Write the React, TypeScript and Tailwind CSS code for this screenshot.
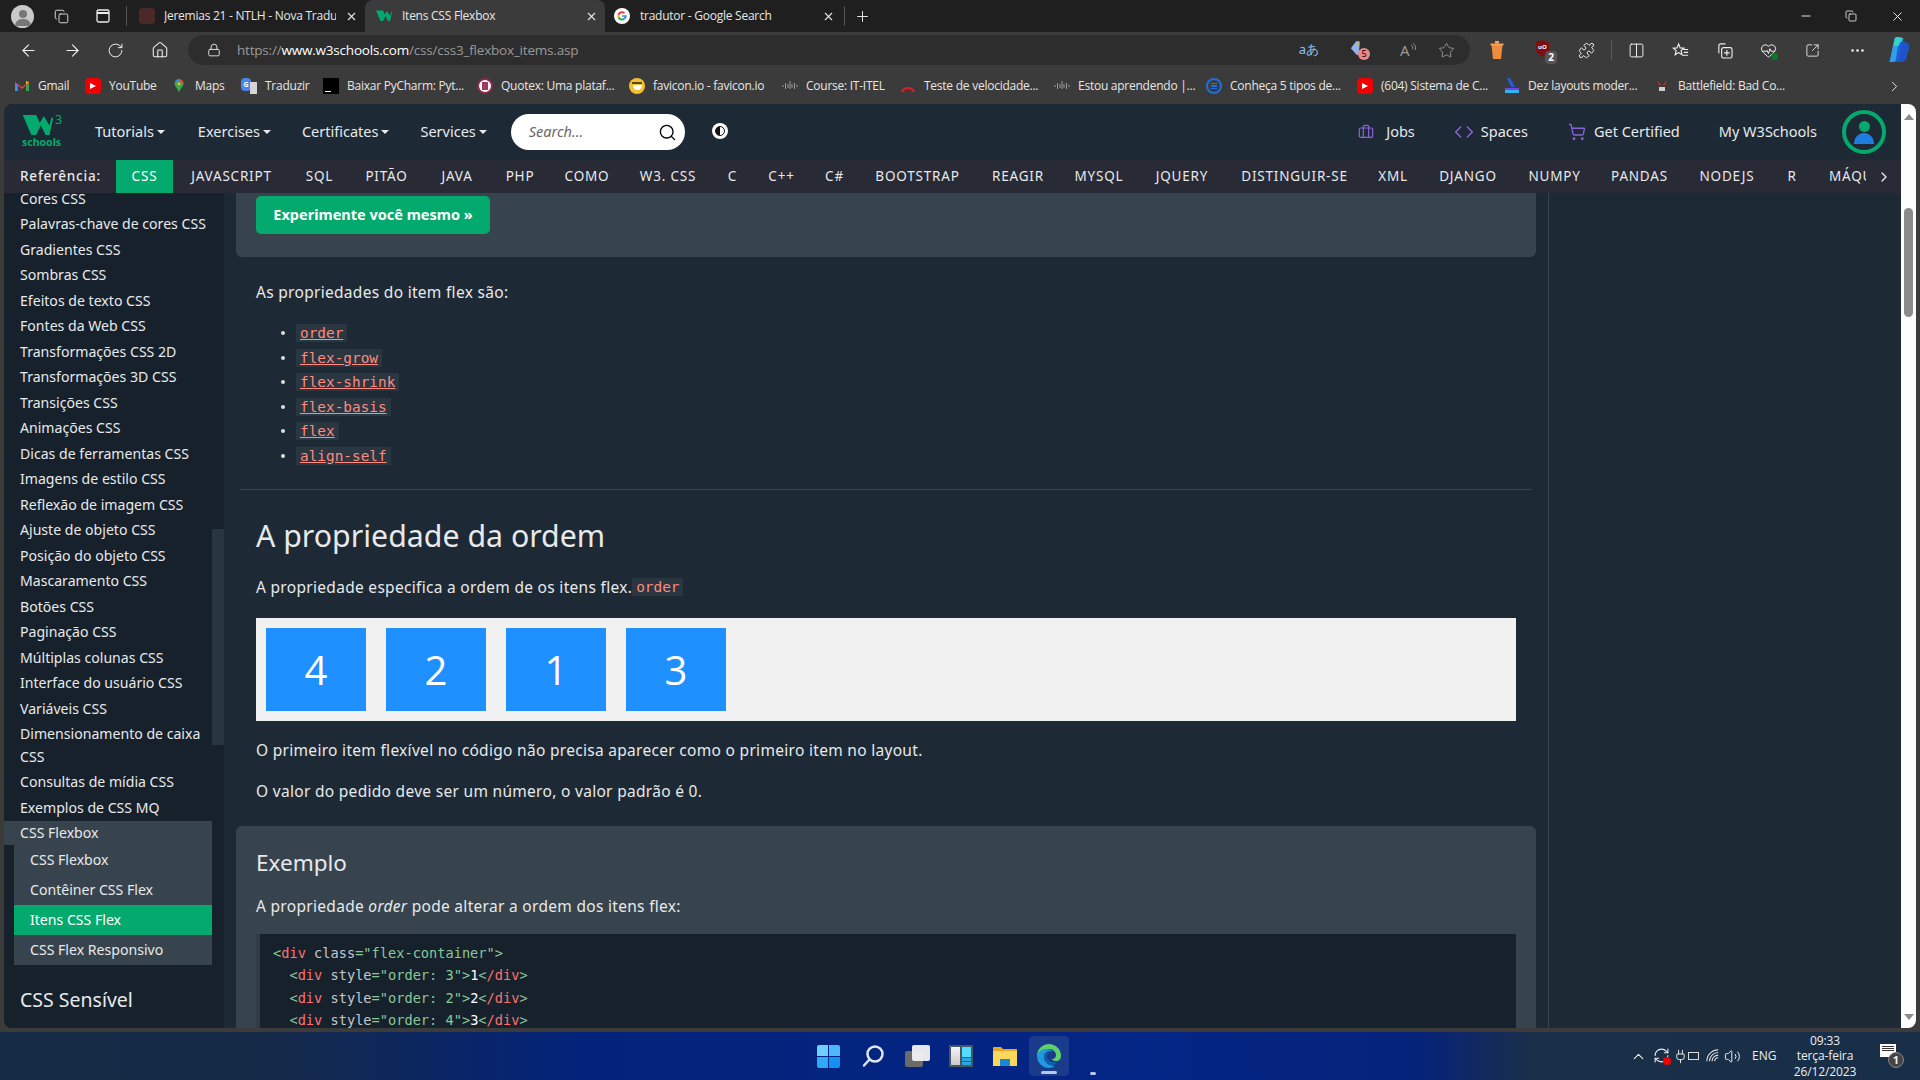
import React from "react";
import { ArrowLeft, ArrowRight, RotateCw, House, Lock, Plus, X, Minus, Star, Puzzle, Columns2, Ellipsis, ChevronRight, ChevronUp, Search, Volume2, RefreshCw, Briefcase, Code, ShoppingCart, Copy, HeartPulse, Plug, SquareArrowOutUpRight } from "lucide-react";

const W = ({ className }: { className?: string }) => (
  <svg viewBox="0 0 32 22" className={className}><path d="M0 0H14L18 8L22 1L28 11L30 3H32L28 21H24L19 11L14 21H9Z" fill="#04aa6d" /></svg>
);

const G = () => (
  <svg viewBox="0 0 24 24" className="w-4 h-4"><circle cx="12" cy="12" r="12" fill="#fff" /><path d="M12 5a7 7 0 0 1 4.700 1.800l-2 2A4 4 0 0 0 8.200 11H5.300A7 7 0 0 1 12 5z" fill="#ea4335" /><path d="M5.300 11h2.900a4 4 0 0 0 0 2.200l-2.600 2a7 7 0 0 1-.3-4.200z" fill="#fbbc05" /><path d="M8.200 13.200A4 4 0 0 0 14.300 15l2.300 1.800A7 7 0 0 1 5.600 15.200z" fill="#34a853" /><path d="M19 11v2.500c-.3 1.300-1.100 2.500-2.400 3.300L14.300 15c.7-.5 1.200-1.100 1.400-2H12v-2z" fill="#4285f4" /></svg>
);

const Yt = () => (
  <div className="w-4 h-4 rounded bg-[#f00000] flex items-center justify-center">
    <div className="w-0 h-0 border-y-[3.500px] border-y-transparent border-l-[6px] border-l-white" />
  </div>
);

const Cisco = () => (
  <svg viewBox="0 0 16 16" className="w-4 h-4" stroke="#9a9a9a" strokeWidth="1"><path d="M1 7v2M3.500 5v6M6 6v4M8 3v8M10 6v4M12.500 5v6M15 7v2" /></svg>
);

const bookmarks: { w: string; g: string; icon: React.ReactNode; t: string }[] = [
  { w: "w-[71px]", g: "gap-2", t: "Gmail", icon: <svg viewBox="0 0 16 16" className="w-4 h-4"><path d="M1 13V4l7 5 7-5v9h-3V7.500L8 11 4 7.500V13z" fill="#ea4335" /><path d="M1 13h3V7.500L1 5z" fill="#4285f4" /><path d="M12 13h3V5l-3 2.500z" fill="#34a853" /><path d="M15 4l-3 2.500V3z" fill="#fbbc05" /></svg> },
  { w: "w-[88px]", g: "gap-2", t: "YouTube", icon: <Yt /> },
  { w: "w-[68px]", g: "gap-[10px]", t: "Maps", icon: <svg viewBox="0 0 16 18" className="w-3 h-[18px]"><path d="M8 0a6 6 0 0 1 6 6C14 10 9.500 12 8 18 6.500 12 2 10 2 6A6 6 0 0 1 8 0z" fill="#34a853" /><path d="M3 3a6 6 0 0 1 5-3l2 4H6z" fill="#4285f4" /><path d="M14 6L10 4 8 0a6 6 0 0 1 6 6z" fill="#ea4335" /><circle cx="8" cy="6" r="2" fill="#fbbc05" /></svg> },
  { w: "w-[82px]", g: "gap-2", t: "Traduzir", icon: <div className="w-4 h-4 flex"><div className="w-[10px] h-[13px] rounded-sm bg-[#4a86e8] text-white text-[7px] font-bold text-center leading-[13px]">G</div><div className="w-[7px] h-[12px] mt-[4px] -ml-[1px] bg-[#d5d5d5]" /></div> },
  { w: "w-[154px]", g: "gap-2", t: "Baixar PyCharm: Pyt...", icon: <div className="w-4 h-4 bg-black flex items-end pl-[2px] pb-[2px]"><div className="w-[6px] h-[1px] bg-white" /></div> },
  { w: "w-[152px]", g: "gap-2", t: "Quotex: Uma plataf...", icon: <div className="w-4 h-4 rounded-full bg-white border-[2px] border-[#8c2a4a] flex items-center justify-center"><div className="w-[6px] h-[8px] bg-[#a13a5a]" /></div> },
  { w: "w-[153px]", g: "gap-2", t: "favicon.io - favicon.io", icon: <div className="w-4 h-4 rounded-full bg-[#f5c02c] flex flex-col items-center pt-[4px] gap-[1px]"><div className="w-[10px] h-[1.500px] bg-[#5b4a1a]" /><div className="w-[9px] h-[5px] rounded-b-full bg-white" /></div> },
  { w: "w-[118px]", g: "gap-2", t: "Course: IT-ITEL", icon: <Cisco /> },
  { w: "w-[154px]", g: "gap-2", t: "Teste de velocidade...", icon: <svg viewBox="0 0 16 16" className="w-4 h-4" fill="none" stroke="#d3232a" strokeWidth="2"><path d="M2 14a6.500 6.500 0 0 1 12 0" /><path d="M6 14a2.500 2.500 0 0 1 4 0" stroke="#8a1a1f" /></svg> },
  { w: "w-[152px]", g: "gap-2", t: "Estou aprendendo |...", icon: <Cisco /> },
  { w: "w-[151px]", g: "gap-2", t: "Conheça 5 tipos de...", icon: <div className="w-4 h-4 rounded-full border-[2px] border-[#1d6fe0] flex flex-col items-center justify-center gap-[1px]"><div className="w-[6px] h-[1.500px] bg-[#1d6fe0]" /><div className="w-[6px] h-[1.500px] bg-[#1d6fe0]" /><div className="w-[6px] h-[1.500px] bg-[#1d6fe0]" /></div> },
  { w: "w-[147px]", g: "gap-2", t: "(604) Sistema de C...", icon: <Yt /> },
  { w: "w-[150px]", g: "gap-2", t: "Dez layouts moder...", icon: <svg viewBox="0 0 16 16" className="w-4 h-4"><path d="M3 0h3l5 9H7z" fill="#1e5fe0" /><path d="M1 10h14v2H1z" fill="#7a3fe0" /><path d="M1 12h14v3H1z" fill="#2fb4f0" /></svg> },
  { w: "w-[232px]", g: "gap-2", t: "Battlefield: Bad Co...", icon: <svg viewBox="0 0 16 16" className="w-4 h-4"><path d="M1 1h14l-2 9-5 5-5-5z" fill="#3a3a3a" /><path d="M3 2l2 5h2zM13 2l-2 5H9z" fill="#c0322c" /><path d="M5 9h6v4H5z" fill="#cfcfcf" /></svg> },
];

const refs: [string, string][] = [
  ["w-[117px]", "JAVASCRIPT"], ["w-[59px]", "SQL"], ["w-[75px]", "PITÃO"], ["w-[66px]", "JAVA"], ["w-[60px]", "PHP"], ["w-[74px]", "COMO"], ["w-[88px]", "W3. CSS"], ["w-[41px]", "C"], ["w-[57px]", "C++"], ["w-[49px]", "C#"], ["w-[117px]", "BOOTSTRAP"], ["w-[84px]", "REAGIR"], ["w-[78px]", "MYSQL"], ["w-[88px]", "JQUERY"], ["w-[137px]", "DISTINGUIR-SE"], ["w-[60px]", "XML"], ["w-[90px]", "DJANGO"], ["w-[83px]", "NUMPY"], ["w-[87px]", "PANDAS"], ["w-[88px]", "NODEJS"], ["w-[42px]", "R"],
];

const side1 = ["Cores CSS", "Palavras-chave de cores CSS", "Gradientes CSS", "Sombras CSS", "Efeitos de texto CSS", "Fontes da Web CSS", "Transformações CSS 2D", "Transformações 3D CSS", "Transições CSS", "Animações CSS", "Dicas de ferramentas CSS", "Imagens de estilo CSS", "Reflexão de imagem CSS", "Ajuste de objeto CSS", "Posição do objeto CSS", "Mascaramento CSS", "Botões CSS", "Paginação CSS", "Múltiplas colunas CSS", "Interface do usuário CSS", "Variáveis CSS", "Dimensionamento de caixa CSS", "Consultas de mídia CSS", "Exemplos de CSS MQ"];

const Tag = ({ t, a, v, c }: { t: string; a?: string; v?: string; c?: string }) => (
  <>
    <span className="text-[#88c999]">&lt;</span><span className="text-[#ff7070]">{t}</span>
    {a && <span className="text-[#c2c8d0]"> {a}</span>}
    {v && <span className="text-[#88c999]">={v}</span>}
    <span className="text-[#88c999]">&gt;</span>
    {c && <span className="text-white">{c}</span>}
    {c && <><span className="text-[#88c999]">&lt;</span><span className="text-[#ff7070]">/{t}</span><span className="text-[#88c999]">&gt;</span></>}
  </>
);

const flexList = ["order", "flex-grow", "flex-shrink", "flex-basis", "flex", "align-self"];

export default function App() {
  return (
    <div className="w-[1920px] h-[1080px] overflow-hidden flex flex-col bg-[#3b3b3b] font-['Noto_Sans',sans-serif]">
      {/* tab strip */}
      <div className="h-8 shrink-0 bg-[#1f1f1f] flex items-center text-[12px] tracking-[-0.250px] text-[#e6e6e6] font-['Open_Sans',sans-serif]">
        <div className="ml-[11px] w-[23px] h-[23px] rounded-full bg-[#c9c9c9] overflow-hidden flex flex-col items-center pt-[5px]">
          <div className="w-2 h-2 rounded-full bg-[#777]" />
          <div className="w-4 h-[7px] mt-[1px] rounded-t-full bg-[#777]" />
        </div>
        <Copy size={15} strokeWidth={1.400} className="ml-[20px] text-[#eee]" />
        <svg viewBox="0 0 16 16" className="w-4 h-4 ml-[26px]" fill="none" stroke="#eee" strokeWidth="1.300"><rect x="2" y="2" width="12" height="12" rx="1.500" /><path d="M2 5h12" strokeWidth="2" /></svg>
        <div className="ml-[15px] w-px h-5 bg-[#555]" />
        <div className="w-[238px] h-8 flex items-center">
          <div className="ml-[12px] w-4 h-4 rounded-sm bg-[#4a2a28]" />
          <span className="ml-[9px] w-[172px] overflow-hidden whitespace-nowrap">Jeremias 21 - NTLH - Nova Tradu</span>
          <X size={13} className="ml-[9px]" />
        </div>
        <div className="w-[240px] h-8 bg-[#3b3b3b] rounded-t-lg flex items-center">
          <W className="ml-[11px] w-4 h-3" />
          <span className="ml-[10px] w-[180px] whitespace-nowrap">Itens CSS Flexbox</span>
          <X size={13} className="ml-[3px]" />
        </div>
        <div className="w-[239px] h-8 flex items-center">
          <div className="ml-[9px]"><G /></div>
          <span className="ml-[10px] w-[181px] whitespace-nowrap">tradutor - Google Search</span>
          <X size={13} className="ml-[1px]" />
        </div>
        <div className="w-px h-5 bg-[#555]" />
        <Plus size={17} strokeWidth={1.400} className="ml-[9px]" />
        <div className="flex-1" />
        <Minus size={14} strokeWidth={1.500} className="mr-[32px] text-white" />
        <Copy size={12} strokeWidth={1.500} className="mr-[33px] text-white" />
        <X size={15} strokeWidth={1.400} className="mr-[15px] text-white" />
      </div>

      {/* toolbar */}
      <div className="h-9 shrink-0 flex items-center text-[#eeeeee]">
        <ArrowLeft size={19} strokeWidth={1.400} className="ml-[19px]" />
        <ArrowRight size={19} strokeWidth={1.400} className="ml-[25px]" />
        <RotateCw size={17} strokeWidth={1.400} className="ml-[25px]" />
        <House size={18} strokeWidth={1.400} className="ml-[27px]" />
        <div className="ml-[19px] w-[1282px] h-[30px] rounded-full bg-[#2d2d2d] flex items-center">
          <Lock size={14} strokeWidth={1.500} className="ml-[19px]" />
          <div className="ml-[16px] text-[13.500px] whitespace-nowrap font-['Open_Sans',sans-serif] tracking-[-0.200px]">
            <span className="text-[#9a9a9a]">https://</span><span className="text-white">www.w3schools.com</span><span className="text-[#9a9a9a]">/css/css3_flexbox_items.asp</span>
          </div>
          <div className="flex-1" />
          <span className="text-[13px] text-[#8fc0ea] mr-[31px]">aあ</span>
          <div className="relative w-5 h-5 mr-[30px]">
            <svg viewBox="0 0 16 20" className="w-[14px] h-[18px]"><path d="M7 1h4v4l-1 11-2 1-7-8z" fill="#8fb4e8" /><circle cx="9" cy="4" r="1.500" fill="#f0b429" /></svg>
            <div className="absolute right-0 bottom-0 w-3 h-3 rounded-full bg-[#e88a8a] text-[9px] leading-3 text-center text-black">5</div>
          </div>
          <div className="w-[17px] h-[20px] mr-[21px] flex items-center text-[#9a9a9a]">
            <span className="text-[15px] leading-none">A</span>
            <svg viewBox="0 0 8 12" className="w-[7px] h-[11px] -mt-[6px]" fill="none" stroke="#9a9a9a" strokeWidth="1"><path d="M1 3a4 4 0 0 1 2 5M3 1a7 7 0 0 1 3 8" /></svg>
          </div>
          <Star size={17} strokeWidth={1.200} className="text-[#a0a0a0] mr-[15px]" />
        </div>
        <svg viewBox="0 0 16 20" className="w-4 h-5 ml-[19px]"><path d="M2.500 5h11l-1.500 14h-8z" fill="#f08a3c" /><path d="M1.500 3.500h13v2h-13z" fill="#f6a35c" /><rect x="6" y="1" width="4" height="2.500" fill="#f6a35c" /></svg>
        <div className="relative w-5 h-5 ml-[30px]">
          <svg viewBox="0 0 16 18" className="w-[15px] h-[17px]"><path d="M1 2l7-2 7 2v8c0 4-4 6-7 8-3-2-7-4-7-8z" fill="#7c0f12" /></svg>
          <span className="absolute left-[3px] top-[3px] text-[6px] leading-[8px] font-bold text-white">uO</span>
          <div className="absolute -right-[2px] -bottom-[4px] w-[12px] h-[13px] rounded-sm bg-[#555] text-[10px] font-bold leading-[13px] text-center text-white">2</div>
        </div>
        <Puzzle size={17} strokeWidth={1.400} className="ml-[23px]" />
        <div className="ml-[16px] w-px h-5 bg-[#5a5a5a]" />
        <Columns2 size={17} strokeWidth={1.400} className="ml-[16px]" />
        <svg viewBox="0 0 18 18" className="ml-[27px] w-[17px] h-[17px]" fill="none" stroke="#eee" strokeWidth="1.200"><path d="M7 2l1.700 4.200 4 .3-3.100 2.700 1 4.300L7 11.200l-3.600 2.300 1-4.300L1.300 6.500l4-.3z" /><path d="M12 8h5M12.500 11h4.500M11 14h6" /></svg>
        <svg viewBox="0 0 18 18" className="ml-[27px] w-[17px] h-[17px]" fill="none" stroke="#eee" strokeWidth="1.200"><path d="M3 12V4a2 2 0 0 1 2-2h5" /><rect x="6" y="6" width="11" height="11" rx="2" /><path d="M11.500 8.500v6M8.500 11.500h6" /></svg>
        <div className="relative ml-[27px] w-[17px] h-[17px]">
          <HeartPulse size={17} strokeWidth={1.400} />
          <div className="absolute -right-[1px] -bottom-[1px] w-[7px] h-[7px] rounded-full bg-[#0c7a2c]" />
        </div>
        <SquareArrowOutUpRight size={15} strokeWidth={1.400} className="ml-[28px]" />
        <Ellipsis size={17} strokeWidth={1.800} className="ml-[29px]" />
        <svg viewBox="0 0 24 28" className="w-[25px] h-[28px] ml-[20px]"><path d="M8 2h9l-5 20c-1 3-3 4-6 4H3z" fill="#2f9fe8" /><path d="M12 6h6c2 0 5 2 5 5l-3 11c-1 3-3 4-6 4H9z" fill="#1c58d8" opacity="0.900" /><path d="M9 1c3 0 6 0 7 1l-4 8-5 0z" fill="#37d3c0" /></svg>
      </div>

      {/* bookmarks */}
      <div className="h-9 shrink-0 flex items-center pl-[14px] text-[12px] text-[#e6e6e6] font-['Open_Sans',sans-serif] tracking-[-0.250px]">
        {bookmarks.map((b) => (
          <div key={b.t} className={`${b.w} ${b.g} shrink-0 flex items-center whitespace-nowrap overflow-hidden`}>
            <span className="shrink-0">{b.icon}</span>
            <span>{b.t}</span>
          </div>
        ))}
        <ChevronRight size={17} strokeWidth={1.400} className="shrink-0" />
      </div>

      {/* page */}
      <div className="h-[924px] shrink-0 mx-1 rounded-t-lg rounded-b-lg overflow-hidden flex">
        <div className="w-[1897px] flex flex-col overflow-hidden bg-[#1d2a35]">
          {/* top nav */}
          <div className="h-14 shrink-0 flex items-center text-[14.500px] text-[#e7e9eb]">
            <div className="ml-[18px] w-[40px] h-[36px] flex flex-col text-[#04aa6d] font-bold relative">
              <W className="w-8 h-[21px] mt-[1px]" />
              <span className="absolute right-0 -top-[2px] text-[12px] leading-4 font-normal">3</span>
              <span className="text-[10.500px] leading-[13px] whitespace-nowrap">schools</span>
            </div>
            <span className="ml-[33px]">Tutorials</span>
            <div className="ml-[3px] w-0 h-0 border-x-[4px] border-x-transparent border-t-[4px] border-t-[#e7e9eb]" />
            <span className="ml-[33px]">Exercises</span>
            <div className="ml-[3px] w-0 h-0 border-x-[4px] border-x-transparent border-t-[4px] border-t-[#e7e9eb]" />
            <span className="ml-[31px]">Certificates</span>
            <div className="ml-[3px] w-0 h-0 border-x-[4px] border-x-transparent border-t-[4px] border-t-[#e7e9eb]" />
            <span className="ml-[31px]">Services</span>
            <div className="ml-[3px] w-0 h-0 border-x-[4px] border-x-transparent border-t-[4px] border-t-[#e7e9eb]" />
            <div className="ml-[24px] w-[174px] h-9 rounded-full bg-white flex items-center">
              <span className="ml-[18px] italic text-[#666]">Search...</span>
              <div className="flex-1" />
              <Search size={19} strokeWidth={1.700} className="text-black mr-[8px]" />
            </div>
            <div className="ml-[27px] -mt-[3px] w-[16px] h-[16px] rounded-full bg-white flex items-center justify-center">
              <div className="w-[10px] h-[10px] rounded-full bg-[linear-gradient(90deg,#111_50%,#fff_50%)] border border-[#111]" />
            </div>
            <div className="flex-1" />
            <Briefcase size={16} strokeWidth={1.800} className="text-[#8a63d8]" />
            <span className="ml-[12px]">Jobs</span>
            <Code size={20} strokeWidth={1.800} className="ml-[39px] text-[#8a63d8]" />
            <span className="ml-[7px]">Spaces</span>
            <ShoppingCart size={18} strokeWidth={1.800} className="ml-[40px] text-[#8a63d8]" />
            <span className="ml-[8px]">Get Certified</span>
            <span className="ml-[39px]">My W3Schools</span>
            <div className="ml-[25px] mr-[15px] w-[44px] h-[44px] rounded-full border-[4px] border-[#04aa6d] flex flex-col items-center justify-center overflow-hidden">
              <div className="w-[11px] h-[11px] rounded-full bg-[#04aa6d]" />
              <div className="w-[20px] h-[11px] mt-[1px] rounded-t-full bg-[#1e7fe0]" />
            </div>
          </div>
          {/* reference bar */}
          <div className="h-[33px] shrink-0 bg-[#282a35] flex items-stretch text-[13.500px] tracking-[0.800px] text-[#e7e9eb]">
            <div className="w-[112px] pl-4 flex items-center font-medium">Referência:</div>
            <div className="w-[57px] bg-[#04aa6d] text-white flex items-center justify-center">CSS</div>
            <div className="w-[1693px] flex overflow-hidden">
              {refs.map(([w, t]) => (
                <div key={t} className={`${w} shrink-0 flex items-center justify-center`}>{t}</div>
              ))}
              <div className="pl-4 flex items-center whitespace-nowrap">MÁQUINA</div>
            </div>
            <div className="flex-1 flex items-center pl-[10px]"><ChevronRight size={16} strokeWidth={2} /></div>
          </div>
          {/* body */}
          <div className="flex-1 flex overflow-hidden">
            {/* sidebar */}
            <div className="relative w-[220px] shrink-0 bg-[#17212b] overflow-hidden text-[14.100px] text-[#e7e9eb]">
              <div className="absolute right-0 top-[336px] w-3 h-[216px] bg-[#293640]" />
              <div className="-mt-[7px] w-[208px]">
                {side1.map((s) => (
                  <div key={s} className="pl-4 pr-1 py-[1.500px] leading-[22.500px]">{s}</div>
                ))}
                <div className="pl-4 h-[24.500px] flex items-center bg-[#38444d]">CSS Flexbox</div>
                <div className="ml-[10px]">
                  {["CSS Flexbox", "Contêiner CSS Flex", "Itens CSS Flex", "CSS Flex Responsivo"].map((s, i) => (
                    <div key={s + i} className={`h-[30px] pl-4 flex items-center ${i === 2 ? "bg-[#04aa6d] text-white" : "bg-[#38444d]"}`}>{s}</div>
                  ))}
                </div>
                <div className="pl-4 mt-[20px] text-[19.500px] leading-[30px]">CSS Sensível</div>
                <div className="pl-4 mt-[13px] leading-[22px]">Introdução ao RWD</div>
              </div>
            </div>
            {/* content */}
            <div className="w-[1325px] shrink-0 px-3 border-r border-[#38444d] overflow-hidden text-[15.500px] tracking-[0.300px] text-[#e7e9eb]">
              <div className="bg-[#38444d] rounded-b-md px-5 pt-[3px] pb-[23px] tracking-normal">
                <div className="w-[234px] h-[38px] rounded-[5px] bg-[#04aa6d] text-white font-bold text-[14.500px] flex items-center justify-center">Experimente você mesmo »</div>
              </div>
              <p className="mt-[23px] ml-5 leading-6">As propriedades do item flex são:</p>
              <ul className="mt-[17px] ml-[45px] tracking-normal">
                {flexList.map((f) => (
                  <li key={f} className="h-[24.500px] flex items-center">
                    <span className="w-[4px] h-[4px] rounded-full bg-[#ddd] mr-[11px]" />
                    <span className="h-[18px] px-1 bg-[#2a3640] text-[#ff8a80] underline leading-[18px] text-[14.400px] font-['DejaVu_Sans_Mono',monospace]">{f}</span>
                  </li>
                ))}
              </ul>
              <div className="mt-[21px] mx-1 h-px bg-[#38444d]" />
              <h2 className="mt-[26px] ml-5 text-[30.300px] tracking-normal leading-10 text-[#e7e9eb]">A propriedade da ordem</h2>
              <p className="mt-[19px] ml-5 leading-6 flex items-center">A propriedade especifica a ordem de os itens flex.<span className="h-[18px] px-1 tracking-normal bg-[#2a3640] text-[#ff8a80] leading-[18px] text-[14.400px] font-['DejaVu_Sans_Mono',monospace]">order</span></p>
              <div className="mt-[19px] mx-5 bg-[#f1f1f1] flex pl-[10px] h-[103px] items-center gap-5 tracking-normal">
                {[4, 2, 1, 3].map((n) => (
                  <div key={n} className="w-[100px] h-[83px] bg-[#1e90ff] text-white text-[40px] flex items-center justify-center font-['Open_Sans',sans-serif]">{n}</div>
                ))}
              </div>
              <p className="mt-[17px] ml-5 leading-6">O primeiro item flexível no código não precisa aparecer como o primeiro item no layout.</p>
              <p className="mt-[17px] ml-5 leading-6">O valor do pedido deve ser um número, o valor padrão é 0.</p>
              <div className="mt-[23px] bg-[#38444d] rounded-t-md px-5 pt-[21px] h-[300px]">
                <div className="text-[22.500px] tracking-normal leading-8">Exemplo</div>
                <p className="mt-[15px] leading-6">A propriedade <i>order</i> pode alterar a ordem dos itens flex:</p>
                <div className="mt-[16px] bg-[#17212b] border-l-4 border-[#2f3b45] pl-[13px] pt-[8px] text-[13.650px] tracking-normal leading-[22.400px] whitespace-pre font-['DejaVu_Sans_Mono',monospace]">
                  <div><Tag t="div" a="class" v={'"flex-container"'} /></div>
                  <div>{"  "}<Tag t="div" a="style" v={'"order: 3"'} c="1" /></div>
                  <div>{"  "}<Tag t="div" a="style" v={'"order: 2"'} c="2" /></div>
                  <div>{"  "}<Tag t="div" a="style" v={'"order: 4"'} c="3" /></div>
                  <div>{"  "}<Tag t="div" a="style" v={'"order: 1"'} c="4" /></div>
                </div>
              </div>
            </div>
            <div className="flex-1" />
          </div>
        </div>
        {/* page scrollbar */}
        <div className="w-[15px] shrink-0 bg-[#fdfdfd] flex flex-col items-center pt-[10px] pb-[8px]">
          <div className="w-0 h-0 border-x-[5px] border-x-transparent border-b-[6px] border-b-[#8b8b8b]" />
          <div className="mt-[88px] w-[9px] h-[109px] rounded-full bg-[#8b8b8b]" />
          <div className="flex-1" />
          <div className="w-0 h-0 border-x-[5px] border-x-transparent border-t-[6px] border-t-[#8b8b8b]" />
        </div>
      </div>

      {/* taskbar */}
      <div className="mt-1 h-12 shrink-0 flex items-center [&>*]:shrink-0 text-[12px] text-[#eee] bg-[linear-gradient(90deg,#162b44_0%,#152a48_14%,#03237a_30%,#032585_60%,#06237a_74%,#1a2f48_80%,#182d46_100%)] font-['Open_Sans',sans-serif]">
        <div className="ml-[817px] w-[23px] h-[23px] grid grid-cols-2 gap-[1px]">
          <div className="rounded-tl-[2px] bg-[#6fd0ff]" /><div className="rounded-tr-[2px] bg-[#4ab8fb]" />
          <div className="rounded-bl-[2px] bg-[#2fa8f5]" /><div className="rounded-br-[2px] bg-[#1490f2]" />
        </div>
        <svg viewBox="0 0 24 24" className="ml-[21px] w-6 h-6" fill="none" stroke="#dfe6f0" strokeWidth="2.500" strokeLinecap="round"><circle cx="14" cy="10" r="7.500" /><path d="M8.500 15.500L3 21.500" /></svg>
        <div className="relative ml-[20px] w-[25px] h-[22px]">
          <div className="absolute left-0 top-[6px] w-[18px] h-[16px] rounded-[2px] bg-[#6b6b6b]" />
          <div className="absolute right-0 top-0 w-[18px] h-[16px] rounded-[2px] bg-[#f2f2f2] opacity-95" />
        </div>
        <div className="ml-[19px] w-[24px] h-[22px] bg-[#4a5562] p-[2px] flex gap-[2px]">
          <div className="w-[9px] bg-[linear-gradient(180deg,#f5f5f5,#c8c8c8)]" />
          <div className="flex-1 flex flex-col gap-[1px]">
            <div className="flex-1 bg-[#53dcff]" /><div className="h-[3px] bg-[#2aa6e0]" /><div className="h-[3px] bg-[#2aa6e0]" />
          </div>
        </div>
        <svg viewBox="0 0 24 20" className="ml-[20px] w-6 h-5"><path d="M0 2a1 1 0 0 1 1-1h7l2 2h14v17H0z" fill="#e8a824" /><path d="M0 5h24v15H0z" fill="#fbd75b" /><path d="M7 13h10v7H7z" fill="#1a86d8" /></svg>
        <div className="relative ml-[12px] w-[40px] h-[40px] rounded bg-[#1a3a8c] flex items-center justify-center">
          <svg viewBox="0 0 24 24" className="w-6 h-6"><path d="M12 0a12 12 0 0 1 12 12c0 3-2 5-5 5-2 0-4-1-4-2 3 0 4-2 4-4 0-3-3-6-7-6-5 0-9 3-12 7A12 12 0 0 1 12 0z" fill="#5ed16a" /><path d="M0 12c0-3 4-7 9-7 3 0 5 1 7 3-4-2-9 0-9 5 0 5 5 9 11 9a12 12 0 0 1-6 2A12 12 0 0 1 0 12z" fill="#1e9be0" /><path d="M7 13c0-4 4-5 7-4-3 0-4 2-4 4 0 3 3 5 8 5 1 0 2 0 3-1-2 4-6 5-8 4-3-1-6-4-6-8z" fill="#0f5fa8" /></svg>
          <div className="absolute bottom-[2px] left-[12px] w-4 h-[3px] rounded-full bg-[#b8c8e8]" />
        </div>
        <div className="ml-[21px] mt-[34px] w-[6px] h-[3px] rounded-full bg-[#b8c8e8]" />
        <ChevronUp size={17} strokeWidth={1.500} className="ml-[534px]" />
        <div className="relative ml-[6px] w-[18px] h-[18px]">
          <RefreshCw size={17} strokeWidth={1.500} />
          <div className="absolute right-0 bottom-0 w-2 h-2 rounded-full bg-[#f00000]" />
        </div>
        <Plug size={15} strokeWidth={1.500} className="ml-[2px]" />
        <div className="w-[11px] h-[8px] border border-[#ddd]" />
        <svg viewBox="0 0 16 16" className="ml-[7px] w-[14px] h-[14px]" fill="none" stroke="#ddd" strokeWidth="1.200"><path d="M1 14a13 13 0 0 1 13-13M4 14a10 10 0 0 1 10-10M7 14a7 7 0 0 1 7-7M10 14a4 4 0 0 1 4-4" /></svg>
        <Volume2 size={17} strokeWidth={1.400} className="ml-[4px]" />
        <span className="ml-[11px] text-[12px] w-[24px]">ENG</span>
        <div className="ml-[1px] w-[96px] text-center text-[12px] tracking-[-0.100px] leading-[15.500px]">
          <div>09:33</div>
          <div>terça-feira</div>
          <div>26/12/2023</div>
        </div>
        <div className="relative ml-[7px] w-[24px] h-[24px]">
          <div className="w-[16px] h-[13px] bg-white flex flex-col gap-[1px] p-[2px]"><div className="h-px bg-[#333]" /><div className="h-px bg-[#333]" /><div className="h-px bg-[#333]" /></div>
          <div className="absolute right-0 bottom-0 w-[16px] h-[16px] rounded-full bg-[#444] border border-[#888] text-[11px] leading-[14px] text-center font-bold">1</div>
        </div>
        <div className="w-px h-12 ml-[20px] bg-[#4a5f78]" />
      </div>
    </div>
  );
}
